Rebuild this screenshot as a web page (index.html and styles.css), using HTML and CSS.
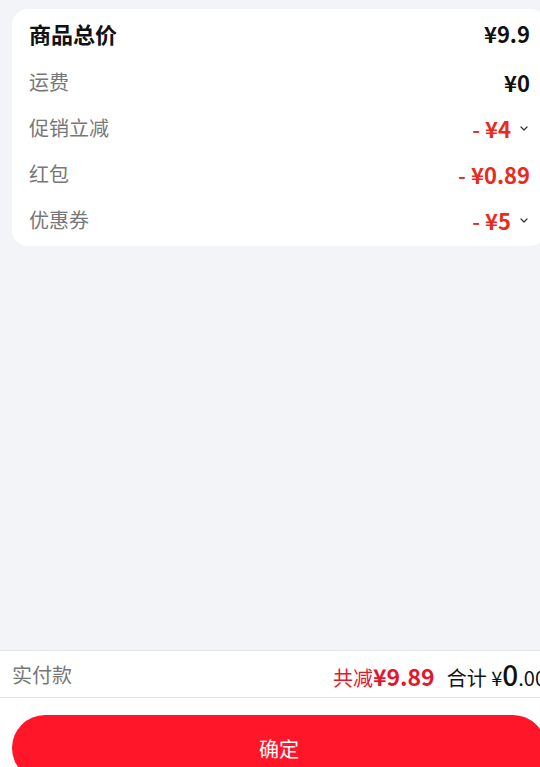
FILE: index.html
```html
<!DOCTYPE html>
<html lang="zh-CN">
<head>
<meta charset="utf-8">
<title>订单确认</title>
<link rel="stylesheet" href="styles.css">
</head>
<body>
<div class="page">
  <main class="content">
    <section class="card">
      <div class="row row-total">
        <span class="label">商品总价</span>
        <span class="value">¥9.9</span>
      </div>
      <div class="row">
        <span class="label">运费</span>
        <span class="value">¥0</span>
      </div>
      <div class="row">
        <span class="label">促销立减</span>
        <span class="value red"><span class="minus">-</span>¥4<svg class="chev" viewBox="0 0 8 5" width="8" height="5"><polyline points="1,1 4,4 7,1" fill="none" stroke="#333" stroke-width="1.2" stroke-linecap="round" stroke-linejoin="round"/></svg></span>
      </div>
      <div class="row">
        <span class="label">红包</span>
        <span class="value red"><span class="minus">-</span>¥0.89</span>
      </div>
      <div class="row">
        <span class="label">优惠券</span>
        <span class="value red"><span class="minus">-</span>¥5<svg class="chev" viewBox="0 0 8 5" width="8" height="5"><polyline points="1,1 4,4 7,1" fill="none" stroke="#333" stroke-width="1.2" stroke-linecap="round" stroke-linejoin="round"/></svg></span>
      </div>
    </section>
  </main>
  <footer class="footer">
    <div class="summary">
      <span class="pay-label">实付款</span>
      <div class="totals">
        <span class="saved">共减<b>¥9.89</b></span>
        <span class="sum">合计 <span class="yen">¥</span><span class="int">0</span><span class="dec">.00</span></span>
      </div>
    </div>
    <div class="action">
      <button class="confirm" type="button">确定</button>
    </div>
  </footer>
</div>
</body>
</html>
```
FILE: styles.css
```css
html, body {
  margin: 0;
  padding: 0;
  background: #f3f4f7;
  overflow: hidden;
}
body {
  font-family: "Noto Sans CJK SC", "Noto Sans", sans-serif;
  color: #111;
}
.page {
  width: 558px;
}
.content {
  height: 650px;
  padding: 9px 12px 0;
  box-sizing: border-box;
}
.card {
  background: #fff;
  border-radius: 16px;
  padding: 3px 16px 3px 17px;
}
.row {
  height: 46px;
  display: flex;
  align-items: center;
  justify-content: space-between;
}
.row-total {
  height: 41px;
  padding-bottom: 6px;
}
.label {
  font-size: 20px;
  color: #777;
  line-height: 1;
}
.row-total .label {
  font-size: 22px;
  font-weight: 700;
  color: #111;
}
.value {
  display: flex;
  align-items: center;
  font-size: 22px;
  font-weight: 600;
  color: #111;
  line-height: 1;
}
.value.red {
  color: #ec2a1c;
}
.minus {
  margin-right: 5px;
  font-weight: 500;
}
.chev {
  margin-left: 9px;
  margin-right: 2px;
}
.footer {
  background: #fff;
  border-top: 1px solid #e6e6e8;
}
.summary {
  height: 46px;
  display: flex;
  align-items: center;
  justify-content: space-between;
  padding: 0 12px;
  border-bottom: 1px solid #e6e6e8;
}
.pay-label {
  font-size: 20px;
  color: #777;
}
.totals {
  display: flex;
  align-items: baseline;
  gap: 12px;
}
.saved {
  color: #e4162c;
  font-size: 20px;
}
.saved b {
  font-size: 23px;
  font-weight: 600;
}
.sum {
  font-size: 20px;
  color: #111;
}
.sum .yen {
  font-size: 20px;
}
.sum .int {
  font-size: 28px;
  font-weight: 500;
}
.sum .dec {
  font-size: 20px;
}
.action {
  padding: 17px 12px 16px;
}
.confirm {
  display: block;
  width: 100%;
  height: 66px;
  border: none;
  border-radius: 33px;
  background: #ff1628;
  color: #fff;
  font-family: "Noto Sans CJK SC", sans-serif;
  font-size: 20px;
  padding: 0;
}
```
